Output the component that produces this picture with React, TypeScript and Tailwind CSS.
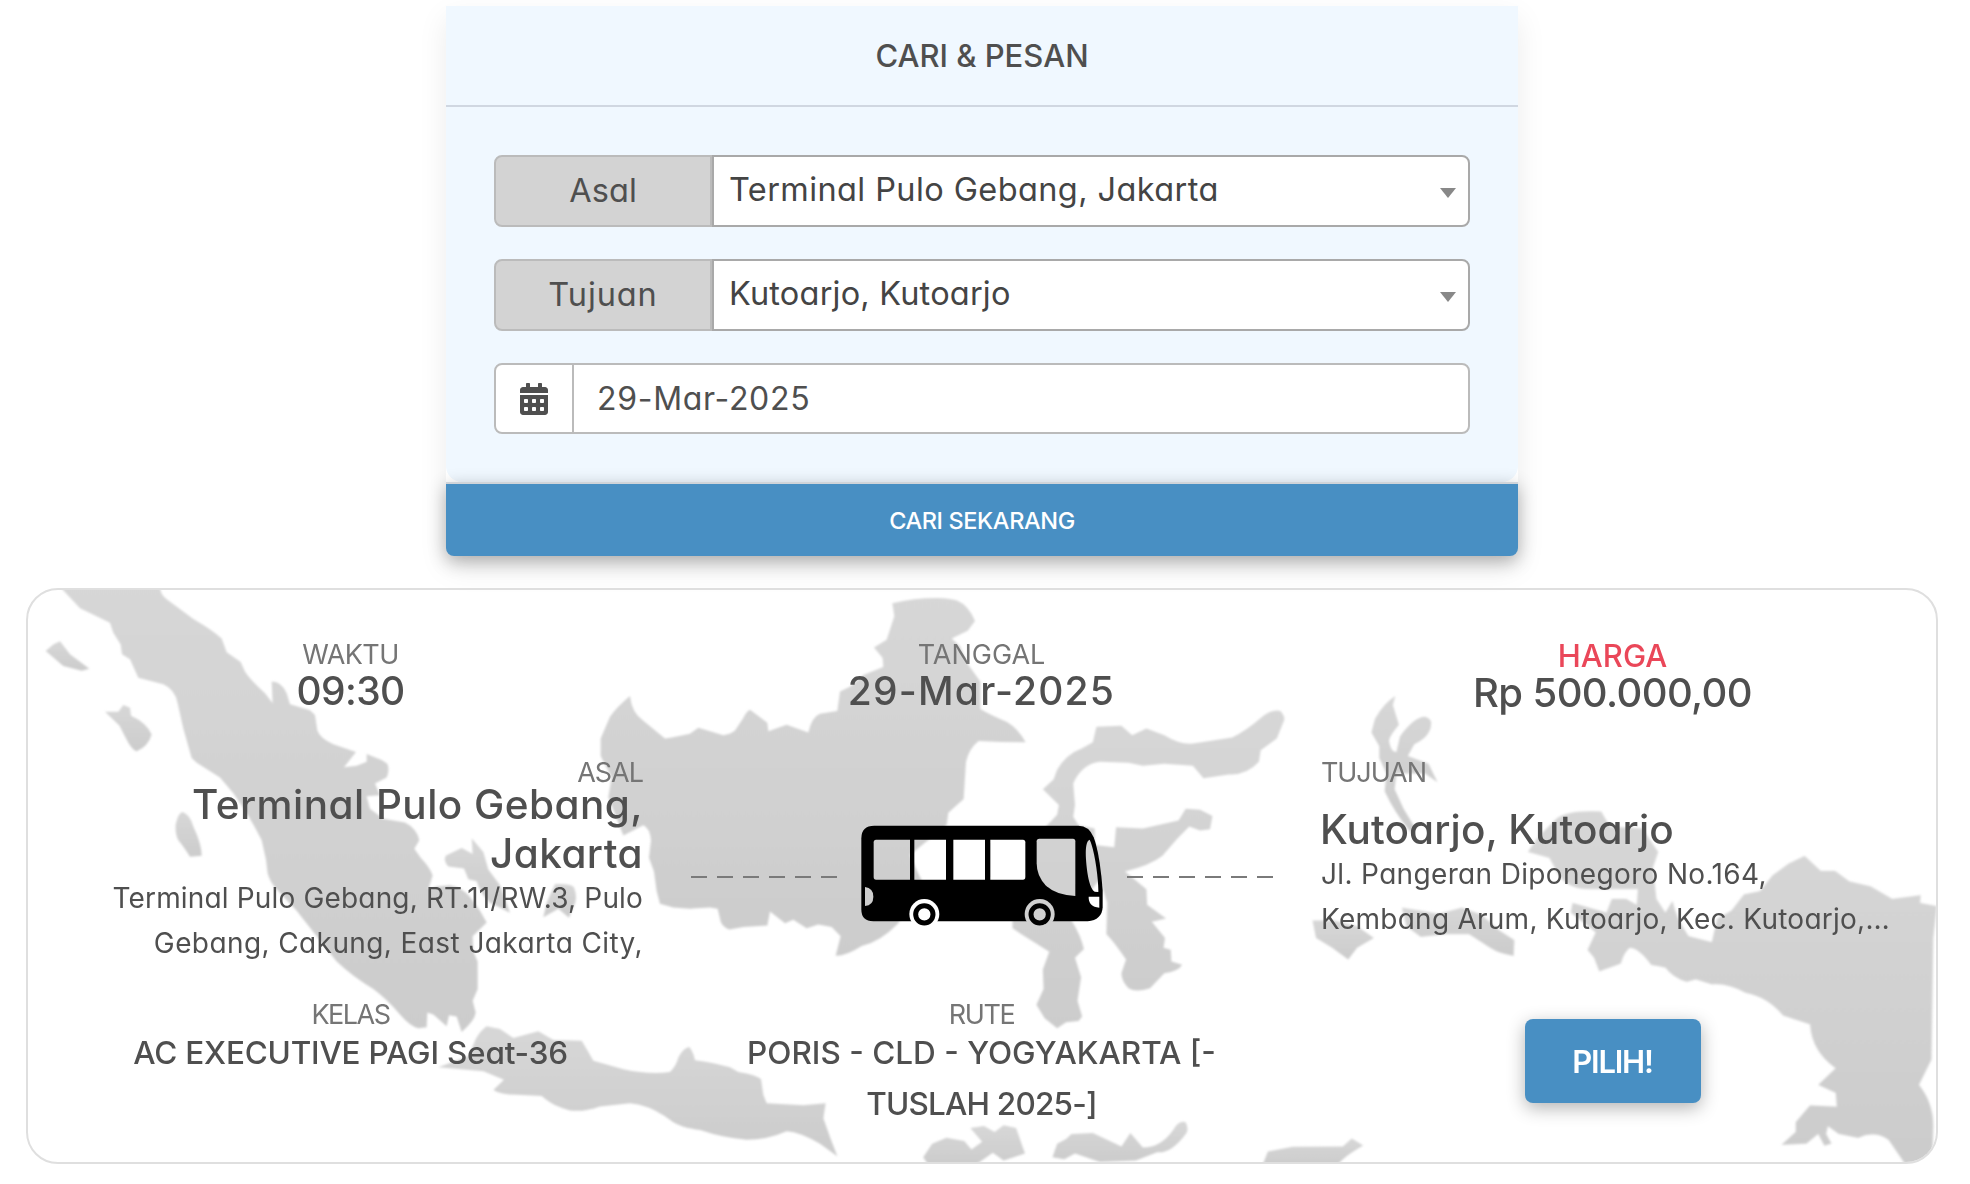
import type { ReactNode } from 'react';
import { FaCalendarAlt } from 'react-icons/fa';

function SelectRow({ label, value, labelTracking, valueTracking }: { label: string; value: string; labelTracking: string; valueTracking: string }) {
  return (
    <div className="flex h-[72px] text-[32.5px] font-[430]">
      <div className={`flex w-[218px] items-center justify-center rounded-l-[8px] border-2 border-[#bbbbbb] bg-[#d3d3d3] text-[#4f4f4f] ${labelTracking}`}>
        {label}
      </div>
      <div className="flex flex-1 items-center justify-between rounded-r-[8px] border-2 border-[#a9a9a9] bg-white pr-[12px] pb-[2px] pl-[15px] text-[#444444]">
        <span className={valueTracking}>{value}</span>
        <svg className="mt-[6px] h-[10px] w-[16px]" viewBox="0 0 16 10" fill="#888888">
          <path d="M0 0H16L8 10Z" />
        </svg>
      </div>
    </div>
  );
}

function Label({ className, children }: { className: string; children: ReactNode }) {
  return <div className={`text-[27px] text-[#757575] ${className}`}>{children}</div>;
}

function IslandMap() {
  return (
    <svg className="absolute inset-0 h-full w-full" viewBox="28 590 1908 572" preserveAspectRatio="none" aria-hidden="true">
      <defs>
        <linearGradient id="land" x1="0" y1="0" x2="0" y2="1">
          <stop offset="0" stopColor="#d7d7d7" />
          <stop offset="1" stopColor="#cccccc" />
        </linearGradient>
        <filter id="soften">
          <feGaussianBlur stdDeviation="0.8" />
        </filter>
      </defs>
      <g fill="url(#land)" filter="url(#soften)">
        <g transform="translate(0 570) scale(0.33333 0.39158)">
          <path d="M175,38 L240,98 L330,135 L340,160 L362,190 L366,215 L390,228 L415,275 L490,292 Q525,305 533,340 L550,405 L575,480 L590,492 L660,530 L700,570 Q750,630 785,690 L798,740 L803,775 Q812,800 830,815 L890,870 Q950,935 1010,1000 Q1060,1040 1120,1070 Q1160,1095 1200,1135 Q1230,1165 1255,1170 L1280,1168 L1282,1130 L1300,1135 L1340,1165 L1347,1137 L1370,1140 L1385,1180 Q1425,1150 1427,1130 L1418,1100 L1433,1070 L1433,1000 L1420,975 L1418,935 L1460,900 L1440,870 L1410,835 Q1385,810 1350,805 L1310,808 L1285,815 L1298,780 Q1290,760 1262,735 L1243,712 L1258,690 Q1250,660 1215,645 L1150,635 L1110,610 L1100,578 L1140,575 L1125,545 L1160,530 Q1170,510 1162,495 L1145,485 L1100,470 L1100,490 L1070,500 L1032,504 L1068,465 L1000,445 Q960,430 952,410 L945,370 L930,358 L870,343 L860,315 Q845,285 815,285 L818,340 L795,315 Q750,280 735,260 L722,235 L680,210 L665,175 Q640,155 580,125 L500,75 Q478,60 480,38 Z" />
          <path d="M137,207 L160,190 L180,182 L210,215 L268,252 L245,257 L190,245 Z" />
          <path d="M315,362 L355,362 L370,345 L390,352 L393,372 Q440,390 455,420 Q445,450 410,463 Q395,460 375,425 L358,397 Z" />
          <path d="M548,618 Q570,625 580,655 Q605,700 605,730 L570,732 Q550,705 535,690 Q525,675 527,650 Q535,620 548,618Z" />
          <path d="M1415,685 L1450,720 L1465,765 L1500,805 L1530,875 L1495,860 L1470,850 Q1440,825 1430,795 L1405,790 L1392,762 L1345,757 Q1330,745 1337,730 L1385,710 L1418,725 Z" />
        </g>
        <g transform="translate(450 570) scale(0.33333 0.39158)">
          <path d="M315,802 Q360,800 372,810 Q385,840 370,860 L357,888 L325,865 L280,887 L290,850 Z" />
          <path d="M540,322 Q545,365 580,385 L645,430 L665,428 L720,418 L745,403 Q780,412 820,422 Q840,420 855,410 L880,378 Q890,360 900,357 L952,390 L955,412 L1010,395 L1075,415 Q1085,375 1110,367 L1162,360 L1170,310 L1200,298 L1240,268 L1300,248 L1298,225 L1272,198 L1310,178 L1333,118 L1327,85 Q1400,70 1480,72 Q1510,74 1521,78 Q1555,90 1575,130 L1553,155 L1505,175 L1530,195 L1553,240 L1591,285 L1591,355 Q1620,370 1671,388 Q1705,405 1727,440 Q1650,440 1586,437 Q1558,455 1548,490 L1541,585 L1495,620 L1490,651 L1410,707 L1380,728 L1400,766 L1415,792 L1385,834 L1345,902 Q1290,950 1235,960 Q1190,985 1157,985 L1172,935 L1145,912 L1105,905 L1070,915 L1030,893 L1005,902 L960,872 L952,908 L880,912 L838,918 Q812,910 810,890 L803,865 L780,862 L720,865 L670,862 L630,852 L620,820 L612,770 L597,735 L603,690 Q600,660 580,652 L520,678 L475,580 L485,530 L452,475 L452,430 L480,375 Q500,350 540,322Z" />
          <path d="M110,1165 L150,1172 L190,1195 L265,1178 L310,1200 L395,1202 Q415,1230 430,1253 L520,1275 Q600,1290 660,1282 Q680,1265 685,1245 Q700,1220 718,1218 Q730,1230 735,1252 Q800,1260 840,1270 L865,1282 Q920,1290 933,1300 L940,1340 L950,1362 L1060,1367 L1127,1362 L1120,1400 Q1140,1450 1162,1497 L1110,1465 Q1050,1435 1010,1433 Q950,1455 890,1455 Q820,1450 750,1430 Q700,1425 670,1410 Q600,1365 540,1362 L450,1370 Q400,1385 360,1380 Q310,1370 275,1343 L200,1340 Q150,1340 130,1328 L162,1302 L100,1280 L-35,1270 L60,1240 Q75,1185 110,1165Z" />
        </g>
        <g transform="translate(900 570) scale(0.35714 0.39158)">
          <path d="M550,400 L620,398 L650,422 L690,405 L740,422 Q790,450 830,442 L930,428 Q970,410 1010,378 Q1040,355 1065,360 Q1080,375 1075,385 L1055,430 L1010,460 L1005,490 Q970,525 920,522 L850,532 L820,500 L740,495 L680,500 L640,492 L560,490 Q510,495 485,545 L490,600 L485,630 L500,652 L545,660 L545,702 L600,708 L605,657 L680,660 L780,640 L800,610 L840,612 L875,628 L868,662 L840,665 L810,655 Q770,690 735,730 Q700,755 630,770 L690,815 L692,855 L745,890 L705,898 L742,940 L738,965 L758,970 L760,1000 L790,1008 Q780,1025 740,1030 L700,1068 Q660,1080 640,1068 Q620,1050 620,1030 L633,995 Q600,950 578,930 L580,850 L560,790 L520,835 L480,895 Q505,930 515,968 L490,990 L507,1040 L497,1100 L510,1140 L500,1152 L465,1155 L440,1170 L405,1145 L382,1110 L402,1070 L400,1020 L418,975 L340,930 L315,915 L315,890 L365,800 L370,700 L412,652 L440,625 L445,600 L400,560 L430,535 L440,510 Q465,470 510,455 L540,440 Z" />
          <path d="M1387,322 L1380,345 L1397,395 Q1365,430 1370,440 Q1375,465 1390,465 L1400,425 Q1440,375 1470,375 Q1490,380 1487,395 Q1485,425 1440,445 L1422,475 L1480,495 L1505,542 L1470,520 L1390,520 L1385,560 L1410,610 L1440,655 L1430,670 Q1385,620 1357,565 L1362,520 L1342,480 L1342,450 L1320,415 L1330,380 Q1355,340 1387,322Z" />
          <path d="M1155,895 L1215,895 L1280,910 L1327,940 L1280,965 L1255,995 L1210,965 L1165,940 Z" />
          <path d="M65,1500 L90,1465 L130,1450 L180,1458 L200,1480 L230,1460 L197,1425 L235,1420 L265,1435 L290,1418 L325,1425 L350,1490 L290,1508 L260,1488 L210,1520 L80,1520Z" />
          <path d="M427,1500 L440,1465 L465,1453 L480,1440 L540,1438 L620,1472 L645,1438 L680,1475 Q730,1475 765,1430 Q780,1405 800,1410 Q810,1430 800,1440 Q760,1490 720,1487 L660,1508 L560,1512 L490,1490 L460,1505 Z" />
          <path d="M1015,1520 L1030,1485 L1100,1473 L1240,1472 L1265,1452 L1297,1470 Q1240,1500 1225,1520Z" />
        </g>
        <g transform="translate(1410 570) scale(0.35714 0.39158)">
          <path d="M-23,862 L30,870 L80,878 L145,862 L200,880 L250,920 L292,945 L290,985 Q250,980 225,965 L165,930 L100,930 L30,937 L-10,910Z" />
          <path d="M330,720 L360,680 L410,635 Q440,612 535,616 L560,655 L650,660 L695,720 L680,760 L690,840 L715,875 L735,845 Q745,890 780,935 L845,950 L860,890 L900,870 L935,828 L980,820 L1015,780 L1060,750 L1105,730 L1150,768 L1190,768 L1230,795 L1290,808 L1350,840 L1430,830 L1428,850 L1475,858 L1465,940 L1460,1250 L1425,1315 Q1465,1360 1465,1420 L1462,1520 L1385,1515 L1340,1455 Q1300,1430 1255,1450 L1200,1440 L1170,1420 L1165,1440 L1180,1465 L1160,1470 L1143,1440 L1110,1465 L1040,1468 L1080,1435 L1080,1410 L1120,1367 L1195,1370 L1192,1335 L1143,1315 L1192,1272 Q1125,1230 1120,1160 L1045,1138 Q1000,1090 940,1080 Q890,1055 845,1058 L800,1045 L775,1052 Q735,1040 715,1015 L675,1008 Q640,965 615,965 Q600,975 590,1005 L530,1025 L515,990 L497,970 L520,925 L450,875 L455,850 L550,875 L565,840 L605,840 L635,855 L638,815 L500,815 Q430,815 405,760 L390,735 Z" />
        </g>
      </g>
    </svg>
  );
}

function Bus() {
  return (
    <svg className="h-[102px] w-[244px]" viewBox="60 75 732 306" aria-label="bus">
      <defs>
        <mask id="glass" maskUnits="userSpaceOnUse" x="60" y="75" width="732" height="306">
          <rect x="60" y="75" width="732" height="306" fill="white" />
          <g fill="black">
            <path d="M108,119 H210 V239 H108 Q101,239 101,231 V127 Q101,119 108,119Z" />
            <path d="M223,119H318V239H223Z" />
            <path d="M340,119H435V239H340Z" />
            <path d="M451,119H549Q556,119 556,127V231Q556,239 549,239H451Z" />
            <path d="M598,116H699Q706,116 706,124V288Q650,286 620,259Q590,230 590,190V124Q590,116 598,116Z" />
            <path d="M749,119C738,122 736,150 738,178C741,225 750,268 764,275L775,276C776,240 764,150 749,119Z" />
            <path d="M746,290H778V323Q745,320 746,290Z" />
            <path d="M75,261Q100,264 100,290Q100,316 75,318Z" />
            <circle cx="253" cy="342" r="45" />
            <circle cx="599" cy="342" r="45" />
          </g>
        </mask>
      </defs>
      <path mask="url(#glass)" d="M103,77H715Q747,77 761,112Q779,158 788,270V322Q786,360 743,364H100Q64,364 64,328V115Q64,77 103,77Z" />
      <circle cx="253" cy="343" r="26" fill="none" stroke="black" strokeWidth="15" />
      <circle cx="599" cy="343" r="26" fill="none" stroke="black" strokeWidth="15" />
    </svg>
  );
}

function Dashes() {
  return (
    <div className="mt-[2px] flex w-[146px] justify-between">
      {[0, 1, 2, 3, 4, 5].map((n) => (
        <span key={n} className="h-[2px] w-[16px] bg-[#7a7a7a]" />
      ))}
    </div>
  );
}

export default function App() {
  return (
    <div className="h-[1184px] w-[1970px] overflow-hidden bg-white pt-[6px] font-['Inter',sans-serif] text-[#4f4f4f] [font-feature-settings:'cv11']">
      <section className="mx-auto h-[550px] w-[1072px] -translate-x-[3px] rounded-b-[8px] shadow-[0_12px_30px_rgba(0,0,0,0.08)]">
        <div className="rounded-b-[16px] bg-[#f0f8ff]">
          <h1 className="h-[101px] border-b-2 border-[#d0d7e1] text-center text-[31px] leading-[99px] font-medium">CARI &amp; PESAN</h1>
          <div className="flex h-[375px] flex-col gap-[32px] px-[48px] pt-[48px]">
            <SelectRow label="Asal" value="Terminal Pulo Gebang, Jakarta" labelTracking="tracking-[0.1px]" valueTracking="tracking-[0.4px]" />
            <SelectRow label="Tujuan" value="Kutoarjo, Kutoarjo" labelTracking="tracking-[0.9px]" valueTracking="tracking-[0.2px]" />
            <div className="flex h-[71px] rounded-[8px] border-2 border-[#bbbbbb] bg-white">
              <div className="flex w-[78px] items-center justify-center border-r-2 border-[#bbbbbb]">
                <FaCalendarAlt size={32} />
              </div>
              <div className="flex items-center pl-[23px] text-[32px] font-[430] tracking-[0.7px]">29-Mar-2025</div>
            </div>
          </div>
        </div>
        <button className="block h-[74px] w-full rounded-b-[8px] border-t-2 border-[#d0d4d9] bg-[#488fc3] bg-clip-padding pt-[2px] text-[23.5px] font-medium tracking-[-0.38px] text-white shadow-[0_5px_18px_rgba(0,0,0,0.3)]">
          CARI SEKARANG
        </button>
      </section>

      <section className="relative mt-[32px] ml-[26px] h-[576px] w-[1912px] overflow-hidden rounded-[32px] border-2 border-[#dfdfdf]">
        <IslandMap />
        <div className="relative px-[7px] pt-[49px]">
          <div className="grid h-[126px] w-[1893px] grid-cols-3 text-center">
            <div>
              <Label className="leading-[32px] tracking-[-0.6px]">WAKTU</Label>
              <div className="text-[39px] leading-[39px] font-medium tracking-[-0.6px]">09:30</div>
            </div>
            <div>
              <Label className="leading-[32px] tracking-[0px]">TANGGAL</Label>
              <div className="text-[39px] leading-[39px] font-medium tracking-[1.2px]">29-Mar-2025</div>
            </div>
            <div className="pt-px">
              <div className="text-[31px] leading-[32px] font-medium text-[#ea4759]">HARGA</div>
              <div className="text-[40px] leading-[42px] font-medium tracking-[-0.6px]">Rp 500.000,00</div>
            </div>
          </div>

          <div className="flex h-[237px]">
            <div className="w-[608px] text-right">
              <Label className="leading-[16px] tracking-[-1px]">ASAL</Label>
              <div className="text-[40.5px] leading-[48.5px] font-medium tracking-[0.45px]">
                Terminal Pulo Gebang,
                <br />
                Jakarta
              </div>
              <div className="-mt-[2px] text-[28px] leading-[45px]">
                <span className="tracking-[0.16px]">Terminal Pulo Gebang, RT.11/RW.3, Pulo</span>
                <br />
                <span className="tracking-[0.4px]">Gebang, Cakung, East Jakarta City,</span>
              </div>
            </div>
            <div className="flex h-[221px] w-[678px] items-center justify-between pr-[48px] pl-[48px]">
              <Dashes />
              <Bus />
              <Dashes />
            </div>
            <div className="flex-1">
              <Label className="leading-[16px] tracking-[-1.1px]">TUJUAN</Label>
              <div className="-ml-[1px] pt-[24px] text-[40.5px] leading-[49px] font-medium tracking-[0.1px]">Kutoarjo, Kutoarjo</div>
              <div className="-mt-[2px] text-[28px] leading-[45px] whitespace-nowrap">
                <span className="tracking-[0.34px]">Jl. Pangeran Diponegoro No.164,</span>
                <br />
                <span className="tracking-[0.25px]">Kembang Arum, Kutoarjo, Kec. Kutoarjo,…</span>
              </div>
            </div>
          </div>

          <div className="grid w-[1893px] grid-cols-3 text-center">
            <div>
              <Label className="leading-[26px] tracking-[-1.5px]">KELAS</Label>
              <div className="text-[31.5px] leading-[50.5px] font-medium tracking-[-0.21px]">AC EXECUTIVE PAGI Seat-36</div>
            </div>
            <div>
              <Label className="leading-[26px] tracking-[-1.4px]">RUTE</Label>
              <div className="text-[31.5px] leading-[50.5px] font-medium">
                PORIS - CLD - YOGYAKARTA [-
                <br />
                <span className="tracking-[-0.8px]">TUSLAH 2025-]</span>
              </div>
            </div>
            <div className="pt-[17px]">
              <button className="h-[84px] w-[176px] rounded-[8px] bg-[#488fc3] pt-[3px] text-[31px] font-semibold tracking-[-1.2px] text-white shadow-[0_5px_18px_rgba(0,0,0,0.3)]">
                PILIH!
              </button>
            </div>
          </div>
        </div>
      </section>
    </div>
  );
}
